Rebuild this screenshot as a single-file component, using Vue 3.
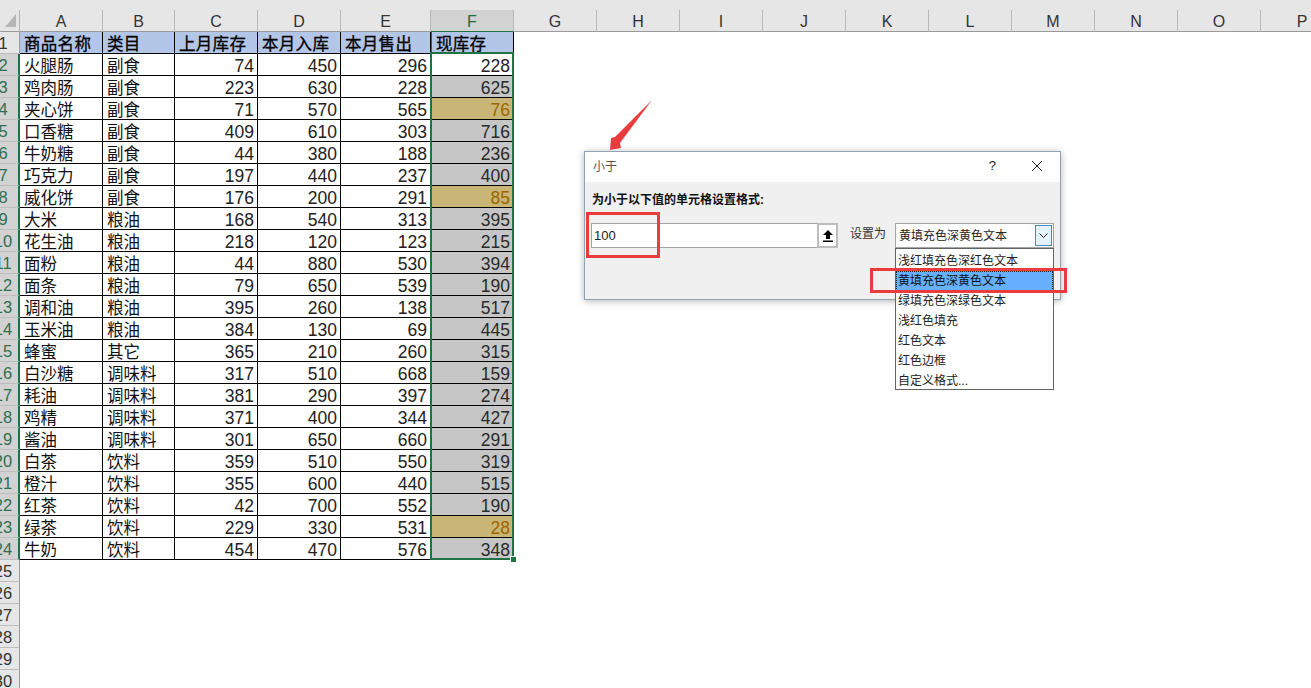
<script setup>
const columns = ['A', 'B', 'C', 'D', 'E', 'F', 'G', 'H', 'I', 'J', 'K', 'L', 'M', 'N', 'O', 'P']
const heads = ['商品名称', '类目', '上月库存', '本月入库', '本月售出', '现库存']
const rows = [
  ['火腿肠', '副食', 74, 450, 296, 228],
  ['鸡肉肠', '副食', 223, 630, 228, 625],
  ['夹心饼', '副食', 71, 570, 565, 76],
  ['口香糖', '副食', 409, 610, 303, 716],
  ['牛奶糖', '副食', 44, 380, 188, 236],
  ['巧克力', '副食', 197, 440, 237, 400],
  ['威化饼', '副食', 176, 200, 291, 85],
  ['大米', '粮油', 168, 540, 313, 395],
  ['花生油', '粮油', 218, 120, 123, 215],
  ['面粉', '粮油', 44, 880, 530, 394],
  ['面条', '粮油', 79, 650, 539, 190],
  ['调和油', '粮油', 395, 260, 138, 517],
  ['玉米油', '粮油', 384, 130, 69, 445],
  ['蜂蜜', '其它', 365, 210, 260, 315],
  ['白沙糖', '调味料', 317, 510, 668, 159],
  ['耗油', '调味料', 381, 290, 397, 274],
  ['鸡精', '调味料', 371, 400, 344, 427],
  ['酱油', '调味料', 301, 650, 660, 291],
  ['白茶', '饮料', 359, 510, 550, 319],
  ['橙汁', '饮料', 355, 600, 440, 515],
  ['红茶', '饮料', 42, 700, 552, 190],
  ['绿茶', '饮料', 229, 330, 531, 28],
  ['牛奶', '饮料', 454, 470, 576, 348]
]
const emptyRows = [25, 26, 27, 28, 29, 30]
const options = ['浅红填充色深红色文本', '黄填充色深黄色文本', '绿填充色深绿色文本', '浅红色填充', '红色文本', '红色边框', '自定义格式...']

function stockClass(rowIndex, value) {
  if (rowIndex === 0) return 'active'
  return value < 100 ? 'low' : 'shaded'
}
</script>

<template>
  <div class="page">
    <div class="sheet">
      <div class="corner"><span class="triangle"></span></div>
      <div
        v-for="col in columns"
        :key="col"
        class="col-head"
        :class="{ 'col-selected': col === 'F' }"
      >{{ col }}</div>

      <div class="row-head"><span>1</span></div>
      <div
        v-for="(head, i) in heads"
        :key="head"
        class="cell title"
        :class="{ 'title-selected': i === 5 }"
      >{{ head }}</div>

      <template v-for="(row, r) in rows" :key="row[0]">
        <div class="row-head row-selected"><span>{{ r + 2 }}</span></div>
        <div class="cell">{{ row[0] }}</div>
        <div class="cell">{{ row[1] }}</div>
        <div class="cell num">{{ row[2] }}</div>
        <div class="cell num">{{ row[3] }}</div>
        <div class="cell num">{{ row[4] }}</div>
        <div class="cell num stock" :class="stockClass(r, row[5])">{{ row[5] }}</div>
      </template>

      <div v-for="n in emptyRows" :key="n" class="row-head"><span>{{ n }}</span></div>
    </div>

    <div class="selection"><span class="handle"></span></div>

    <div class="dialog">
      <div class="dialog-title">
        <span>小于</span>
        <div class="title-actions">
          <span class="help">?</span>
          <svg class="close" width="12" height="12" viewBox="0 0 12 12">
            <path d="M1 1L11 11M11 1L1 11" stroke="#222" stroke-width="1" fill="none" />
          </svg>
        </div>
      </div>
      <div class="dialog-body">
        <div class="prompt">为小于以下值的单元格设置格式:</div>
        <div class="controls">
          <div class="input">
            <span class="input-value">100</span>
            <span class="pick">
              <svg width="12" height="13" viewBox="0 0 12 13">
                <path d="M6 1L11 6H8V10H4V6H1Z M1 11.5H11V13H1Z" fill="#000" />
              </svg>
            </span>
          </div>
          <span class="set-label">设置为</span>
          <div class="combo-wrap">
            <div class="combo">
              <span>黄填充色深黄色文本</span>
              <span class="combo-btn">
                <svg width="9" height="6" viewBox="0 0 9 6">
                  <path d="M0.5 0.5L4.5 4.5L8.5 0.5" stroke="#222" fill="none" />
                </svg>
              </span>
            </div>
            <ul class="list">
              <li v-for="(opt, i) in options" :key="opt" :class="{ current: i === 1 }">{{ opt }}</li>
            </ul>
          </div>
        </div>
      </div>
    </div>

    <span class="mark mark-input"></span>
    <span class="mark mark-option"></span>
    <svg class="arrow" width="50" height="60" viewBox="0 0 50 60">
      <path d="M44 0L12 43L13 48L2 50L3 38L7 37Z" fill="#ea3b3f" />
    </svg>
  </div>
</template>

<style>
html, body { margin: 0; background: #fff; }
</style>

<style scoped>
.page {
  position: relative;
  width: 1311px;
  height: 688px;
  overflow: hidden;
  background: #fff;
  font-family: "Liberation Sans", "Noto Sans CJK SC", sans-serif;
}
.sheet {
  display: grid;
  grid-template-columns: 20px 83px 72px 83px 83px 90px 83px repeat(10, 83px);
  grid-template-rows: 32px;
  grid-auto-rows: 22px;
  width: 1400px;
  background: linear-gradient(#e6e6e6 10px, transparent 10px);
}
.corner {
  box-sizing: border-box;
  margin-top: 10px;
  padding: 4px 0 0 5px;
  background: #e6e6e6;
  border-right: 1px solid #b4b4b4;
  border-bottom: 1px solid #9a9a9a;
}
.triangle {
  display: block;
  width: 0;
  height: 0;
  border-left: 11px solid transparent;
  border-bottom: 13px solid #b6b6b6;
}
.col-head {
  box-sizing: border-box;
  margin-top: 10px;
  padding-top: 3px;
  height: 22px;
  line-height: 18px;
  text-align: center;
  font-size: 16px;
  color: #333;
  background: #e6e6e6;
  border-right: 1px solid #b8b8b8;
  border-bottom: 1px solid #9a9a9a;
}
.col-selected {
  color: #1f6b45;
  background: #d2d2d2;
  border-bottom: 1px solid #217346;
}
.row-head {
  grid-column: 1;
  box-sizing: border-box;
  display: flex;
  justify-content: center;
  padding-right: 13px;
  overflow: hidden;
  height: 22px;
  line-height: 23px;
  font-size: 16.500px;
  color: #333;
  background: #e6e6e6;
  border-right: 1px solid #9a9a9a;
  border-bottom: 1px solid #bdbdbd;
}
.row-head span { flex-shrink: 0; }
.row-selected {
  color: #2f6f50;
  background: #d2d2d2;
  border-right: 2px solid #217346;
  padding-right: 12px;
}
.cell {
  box-sizing: border-box;
  height: 22px;
  padding-left: 4px;
  line-height: 25px;
  font-size: 16.500px;
  color: #111;
  white-space: nowrap;
  border-right: 1px solid #000;
  border-bottom: 1px solid #000;
}
.title {
  background: #b4c6e7;
  color: #000;
  letter-spacing: 0.3px;
  -webkit-text-stroke: 0.3px #000;
}
.title-selected { border-left: 1px solid #217346; }
.num {
  padding: 0 3px 0 0;
  text-align: right;
  font-size: 17.500px;
  color: #222;
}
.stock {
  padding-right: 2px;
  border-right: 2px solid #fff;
}
.shaded { background: #c6c6c6; color: #2a2a2a; }
.low { background: #c9b676; color: #9c6500; }
.active { background: #fff; }

.selection {
  position: absolute;
  left: 430px;
  top: 52px;
  width: 80px;
  height: 504px;
  border: 2px solid #217346;
}
.handle {
  position: absolute;
  right: -4px;
  bottom: -4px;
  width: 5px;
  height: 5px;
  background: #217346;
  border: 1px solid #fff;
  border-right-width: 0;
  border-bottom-width: 0;
}

.dialog {
  position: absolute;
  left: 584px;
  top: 151px;
  box-sizing: border-box;
  width: 477px;
  height: 149px;
  border: 1px solid #8fa3b5;
  background: #f0f0f0;
  box-shadow: 0 1px 7px rgba(0, 0, 0, 0.3);
  font-size: 12px;
  color: #222;
}
.dialog-title {
  display: flex;
  align-items: center;
  justify-content: space-between;
  box-sizing: border-box;
  height: 30px;
  padding: 0 17px 4px 8px;
  background: #fff;
  color: #555;
}
.title-actions {
  display: flex;
  align-items: center;
  gap: 35px;
}
.help { font-size: 13px; color: #222; }
.close { display: block; margin-top: 2px; }
.dialog-body {
  padding: 10px 6px 0;
}
.prompt {
  height: 17px;
  padding-left: 1px;
  line-height: 17px;
  font-weight: 700;
  color: #111;
}
.controls {
  display: flex;
  align-items: flex-start;
  margin-top: 14px;
}
.input {
  display: flex;
  box-sizing: border-box;
  width: 247px;
  height: 25px;
  background: #fff;
  border: 1px solid #a4a4a4;
  align-items: stretch;
}
.input-value {
  flex: 1;
  padding-left: 2px;
  line-height: 23px;
  font-size: 13px;
  color: #222;
}
.pick {
  display: flex;
  align-items: center;
  justify-content: center;
  box-sizing: border-box;
  width: 21px;
  background: #fff;
  border: 2px solid #bdbdbd;
  margin: -1px -1px -1px 0;
}
.set-label {
  margin-left: 12px;
  width: 45px;
  line-height: 23px;
  color: #333;
}
.combo-wrap {
  position: relative;
  width: 159px;
}
.combo {
  display: flex;
  align-items: center;
  justify-content: space-between;
  box-sizing: border-box;
  height: 25px;
  padding: 0 1px 0 3px;
  background: #fff;
  border: 1px solid #a4a4a4;
  color: #222;
}
.combo > span:first-child { margin-top: -2px; }
.combo-btn {
  display: flex;
  align-items: center;
  justify-content: center;
  box-sizing: border-box;
  width: 17px;
  height: 21px;
  background: #e5f1fb;
  border: 1px solid #3d8dc4;
}
.list {
  position: absolute;
  left: 0;
  top: 25px;
  box-sizing: border-box;
  width: 159px;
  height: 142px;
  margin: 0;
  padding: 2px 0 0;
  list-style: none;
  background: #fff;
  border: 1px solid #646464;
}
.list li {
  box-sizing: border-box;
  height: 20px;
  padding-left: 2px;
  line-height: 20px;
  color: #222;
  white-space: nowrap;
}
.list li.current {
  background: #66b0ff;
  outline: 1px dotted #222;
  outline-offset: -1px;
  color: #111;
}

.mark {
  position: absolute;
  box-sizing: border-box;
  border: 3px solid #ea3b3f;
}
.mark-input {
  left: 586px;
  top: 212px;
  width: 74px;
  height: 46px;
}
.mark-option {
  left: 870px;
  top: 268px;
  width: 197px;
  height: 25px;
}
.arrow {
  position: absolute;
  left: 608px;
  top: 100px;
}
</style>
